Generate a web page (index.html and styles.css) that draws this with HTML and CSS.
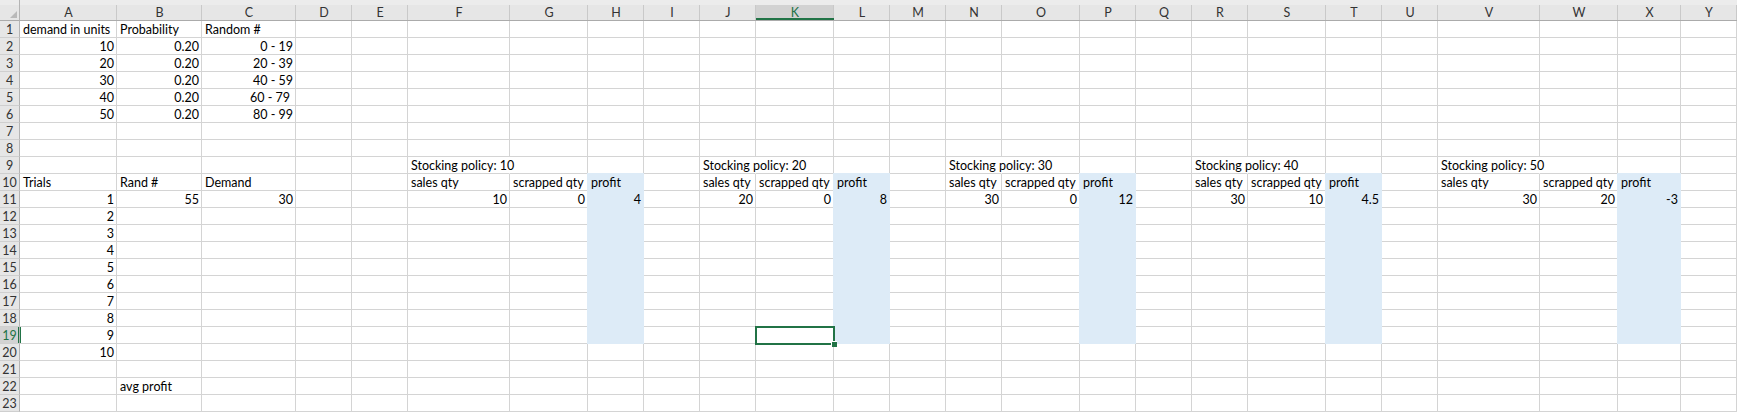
FILE: index.html
```html
<!DOCTYPE html>
<html lang="en">
<head>
  <meta charset="UTF-8">
  <title>Inventory simulation</title>
  <link rel="stylesheet" href="styles.css">
</head>
<body>
  <table class="sheet">
    <colgroup>
      <col class="c20"><col class="c97"><col class="c85"><col class="c94"><col class="c56"><col class="c56">
      <col class="c102"><col class="c78"><col class="c56"><col class="c56"><col class="c56"><col class="c78">
      <col class="c56"><col class="c56"><col class="c56"><col class="c78"><col class="c56"><col class="c56">
      <col class="c56"><col class="c78"><col class="c56"><col class="c56"><col class="c102"><col class="c78">
      <col class="c63"><col class="c56">
    </colgroup>
    <thead>
      <tr>
        <th class="corner"><svg width="7" height="7" viewBox="0 0 7 7"><polygon points="7,0 7,7 0,7" fill="#b9b9b9"/></svg></th>
        <th>A</th><th>B</th><th>C</th><th>D</th><th>E</th><th>F</th><th>G</th><th>H</th><th>I</th><th>J</th>
        <th class="cur">K</th><th>L</th><th>M</th><th>N</th><th>O</th><th>P</th><th>Q</th><th>R</th><th>S</th>
        <th>T</th><th>U</th><th>V</th><th>W</th><th>X</th><th>Y</th>
      </tr>
    </thead>
    <tbody>
      <tr><th>1</th><td>demand in units</td><td>Probability</td><td>Random #</td><td></td><td></td><td></td><td></td><td></td><td></td><td></td><td></td><td></td><td></td><td></td><td></td><td></td><td></td><td></td><td></td><td></td><td></td><td></td><td></td><td></td><td></td></tr>
      <tr><th>2</th><td class="n">10</td><td class="n">0.20</td><td class="n">0 - 19</td><td></td><td></td><td></td><td></td><td></td><td></td><td></td><td></td><td></td><td></td><td></td><td></td><td></td><td></td><td></td><td></td><td></td><td></td><td></td><td></td><td></td><td></td></tr>
      <tr><th>3</th><td class="n">20</td><td class="n">0.20</td><td class="n">20 - 39</td><td></td><td></td><td></td><td></td><td></td><td></td><td></td><td></td><td></td><td></td><td></td><td></td><td></td><td></td><td></td><td></td><td></td><td></td><td></td><td></td><td></td><td></td></tr>
      <tr><th>4</th><td class="n">30</td><td class="n">0.20</td><td class="n">40 - 59</td><td></td><td></td><td></td><td></td><td></td><td></td><td></td><td></td><td></td><td></td><td></td><td></td><td></td><td></td><td></td><td></td><td></td><td></td><td></td><td></td><td></td><td></td></tr>
      <tr><th>5</th><td class="n">40</td><td class="n">0.20</td><td class="n trail">60 - 79</td><td></td><td></td><td></td><td></td><td></td><td></td><td></td><td></td><td></td><td></td><td></td><td></td><td></td><td></td><td></td><td></td><td></td><td></td><td></td><td></td><td></td><td></td></tr>
      <tr><th>6</th><td class="n">50</td><td class="n">0.20</td><td class="n">80 - 99</td><td></td><td></td><td></td><td></td><td></td><td></td><td></td><td></td><td></td><td></td><td></td><td></td><td></td><td></td><td></td><td></td><td></td><td></td><td></td><td></td><td></td><td></td></tr>
      <tr><th>7</th><td></td><td></td><td></td><td></td><td></td><td></td><td></td><td></td><td></td><td></td><td></td><td></td><td></td><td></td><td></td><td></td><td></td><td></td><td></td><td></td><td></td><td></td><td></td><td></td><td></td></tr>
      <tr><th>8</th><td></td><td></td><td></td><td></td><td></td><td></td><td></td><td></td><td></td><td></td><td></td><td></td><td></td><td></td><td></td><td></td><td></td><td></td><td></td><td></td><td></td><td></td><td></td><td></td><td></td></tr>
      <tr><th>9</th><td></td><td></td><td></td><td></td><td></td><td class="spill">Stocking policy: 10</td><td></td><td></td><td></td><td class="spill">Stocking policy: 20</td><td></td><td></td><td></td><td class="spill">Stocking policy: 30</td><td></td><td></td><td></td><td class="spill">Stocking policy: 40</td><td></td><td></td><td></td><td class="spill">Stocking policy: 50</td><td></td><td></td><td></td></tr>
      <tr><th>10</th><td>Trials</td><td>Rand #</td><td>Demand</td><td></td><td></td><td>sales qty</td><td>scrapped qty</td><td class="fill">profit</td><td></td><td>sales qty</td><td>scrapped qty</td><td class="fill">profit</td><td></td><td>sales qty</td><td>scrapped qty</td><td class="fill">profit</td><td></td><td>sales qty</td><td>scrapped qty</td><td class="fill">profit</td><td></td><td>sales qty</td><td>scrapped qty</td><td class="fill">profit</td><td></td></tr>
      <tr><th>11</th><td class="n">1</td><td class="n">55</td><td class="n">30</td><td></td><td></td><td class="n">10</td><td class="n">0</td><td class="fill n">4</td><td></td><td class="n">20</td><td class="n">0</td><td class="fill n">8</td><td></td><td class="n">30</td><td class="n">0</td><td class="fill n">12</td><td></td><td class="n">30</td><td class="n">10</td><td class="fill n">4.5</td><td></td><td class="n">30</td><td class="n">20</td><td class="fill n">-3</td><td></td></tr>
      <tr><th>12</th><td class="n">2</td><td></td><td></td><td></td><td></td><td></td><td></td><td class="fill"></td><td></td><td></td><td></td><td class="fill"></td><td></td><td></td><td></td><td class="fill"></td><td></td><td></td><td></td><td class="fill"></td><td></td><td></td><td></td><td class="fill"></td><td></td></tr>
      <tr><th>13</th><td class="n">3</td><td></td><td></td><td></td><td></td><td></td><td></td><td class="fill"></td><td></td><td></td><td></td><td class="fill"></td><td></td><td></td><td></td><td class="fill"></td><td></td><td></td><td></td><td class="fill"></td><td></td><td></td><td></td><td class="fill"></td><td></td></tr>
      <tr><th>14</th><td class="n">4</td><td></td><td></td><td></td><td></td><td></td><td></td><td class="fill"></td><td></td><td></td><td></td><td class="fill"></td><td></td><td></td><td></td><td class="fill"></td><td></td><td></td><td></td><td class="fill"></td><td></td><td></td><td></td><td class="fill"></td><td></td></tr>
      <tr><th>15</th><td class="n">5</td><td></td><td></td><td></td><td></td><td></td><td></td><td class="fill"></td><td></td><td></td><td></td><td class="fill"></td><td></td><td></td><td></td><td class="fill"></td><td></td><td></td><td></td><td class="fill"></td><td></td><td></td><td></td><td class="fill"></td><td></td></tr>
      <tr><th>16</th><td class="n">6</td><td></td><td></td><td></td><td></td><td></td><td></td><td class="fill"></td><td></td><td></td><td></td><td class="fill"></td><td></td><td></td><td></td><td class="fill"></td><td></td><td></td><td></td><td class="fill"></td><td></td><td></td><td></td><td class="fill"></td><td></td></tr>
      <tr><th>17</th><td class="n">7</td><td></td><td></td><td></td><td></td><td></td><td></td><td class="fill"></td><td></td><td></td><td></td><td class="fill"></td><td></td><td></td><td></td><td class="fill"></td><td></td><td></td><td></td><td class="fill"></td><td></td><td></td><td></td><td class="fill"></td><td></td></tr>
      <tr><th>18</th><td class="n">8</td><td></td><td></td><td></td><td></td><td></td><td></td><td class="fill"></td><td></td><td></td><td></td><td class="fill"></td><td></td><td></td><td></td><td class="fill"></td><td></td><td></td><td></td><td class="fill"></td><td></td><td></td><td></td><td class="fill"></td><td></td></tr>
      <tr><th class="cur">19</th><td class="n">9</td><td></td><td></td><td></td><td></td><td></td><td></td><td class="fill"></td><td></td><td></td><td class="active"><div class="cursor"><span class="handle"></span></div></td><td class="fill"></td><td></td><td></td><td></td><td class="fill"></td><td></td><td></td><td></td><td class="fill"></td><td></td><td></td><td></td><td class="fill"></td><td></td></tr>
      <tr><th>20</th><td class="n">10</td><td></td><td></td><td></td><td></td><td></td><td></td><td></td><td></td><td></td><td></td><td></td><td></td><td></td><td></td><td></td><td></td><td></td><td></td><td></td><td></td><td></td><td></td><td></td><td></td></tr>
      <tr><th>21</th><td></td><td></td><td></td><td></td><td></td><td></td><td></td><td></td><td></td><td></td><td></td><td></td><td></td><td></td><td></td><td></td><td></td><td></td><td></td><td></td><td></td><td></td><td></td><td></td><td></td></tr>
      <tr><th>22</th><td></td><td>avg profit</td><td></td><td></td><td></td><td></td><td></td><td></td><td></td><td></td><td></td><td></td><td></td><td></td><td></td><td></td><td></td><td></td><td></td><td></td><td></td><td></td><td></td><td></td><td></td></tr>
      <tr><th>23</th><td></td><td></td><td></td><td></td><td></td><td></td><td></td><td></td><td></td><td></td><td></td><td></td><td></td><td></td><td></td><td></td><td></td><td></td><td></td><td></td><td></td><td></td><td></td><td></td><td></td></tr>
    </tbody>
  </table>
</body>
</html>
```

FILE: styles.css
```css
* {
  box-sizing: border-box;
}

body {
  margin: 0;
  background-color: #fff;
  font-family: Lato, "Noto Sans", sans-serif;
  font-size: 12.5px;
  color: #000;
  overflow: hidden;
}

.sheet {
  border-collapse: separate;
  border-spacing: 0;
  table-layout: fixed;
  width: 1737px;
}

.c20 { width: 20px; }
.c56 { width: 56px; }
.c63 { width: 63px; }
.c78 { width: 78px; }
.c85 { width: 85px; }
.c94 { width: 94px; }
.c97 { width: 97px; }
.c102 { width: 102px; }

/* column letters */
.sheet thead th {
  height: 21px;
  padding: 5px 0 0;
  line-height: 15px;
  font-weight: normal;
  color: #333;
  text-align: center;
  border-bottom: 1px solid #ababab;
  background:
    linear-gradient(#c9c9c9, #c9c9c9) right 0 top 5px / 1px 15px no-repeat,
    linear-gradient(#ececec, #ececec) left top / 100% 5px no-repeat,
    #e6e6e6;
}

.sheet thead th.corner {
  padding: 0 2px 2px 0;
  text-align: right;
  vertical-align: bottom;
  line-height: 0;
  border-right: 1px solid #b4b4b4;
  background: linear-gradient(#ececec, #ececec) left top / 100% 5px no-repeat, #e6e6e6;
}

/* row numbers */
.sheet tbody th {
  height: 17px;
  padding: 2px 0 0;
  line-height: 14px;
  font-weight: normal;
  color: #333;
  text-align: center;
  background-color: #e6e6e6;
  border-right: 1px solid #b4b4b4;
  border-bottom: 1px solid #cfcfcf;
}

.sheet thead th.cur {
  color: #217346;
  background:
    linear-gradient(#c9c9c9, #c9c9c9) right 0 top 5px / 1px 15px no-repeat,
    linear-gradient(#ececec, #ececec) left top / 100% 5px no-repeat,
    #d2d2d2;
  box-shadow: inset 0 -2px 0 #217346;
}

.sheet tbody th.cur {
  color: #217346;
  background-color: #d2d2d2;
  box-shadow: 1px 0 0 #217346, inset -1px 0 0 #217346;
}

.sheet td {
  height: 17px;
  padding: 2px 2px 0 3px;
  line-height: 14px;
  text-align: left;
  vertical-align: top;
  white-space: nowrap;
  overflow: visible;
  border-right: 1px solid #d4d4d4;
  border-bottom: 1px solid #d4d4d4;
}

.sheet td.n {
  text-align: right;
}

.sheet td.trail {
  padding-right: 5px;
}

/* text running into the empty cell on its right */
.sheet td.spill {
  border-right-color: transparent;
}

.sheet td.fill {
  background-color: #ddebf7;
  border-color: #ddebf7;
  box-shadow: -1px 0 0 #ddebf7, 0 -1px 0 #ddebf7, -1px -1px 0 #ddebf7;
}

.sheet td.active {
  position: relative;
}

.cursor {
  position: absolute;
  left: -1px;
  top: -1px;
  width: 80px;
  height: 19px;
  border: 2px solid #217346;
  z-index: 1;
}

.handle {
  position: absolute;
  right: -4px;
  bottom: -4px;
  width: 6px;
  height: 6px;
  background-color: #217346;
  border-left: 1px solid #fff;
  border-top: 1px solid #fff;
}
```
